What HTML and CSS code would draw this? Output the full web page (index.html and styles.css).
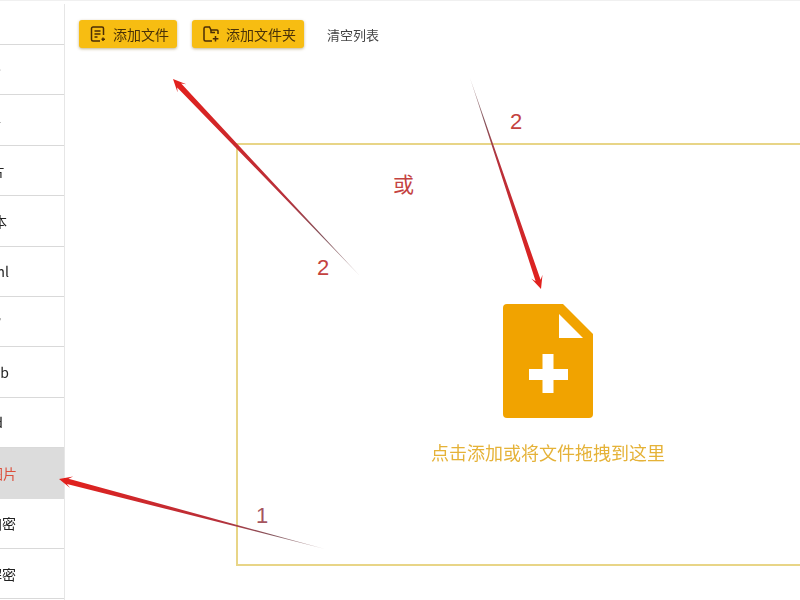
FILE: index.html
```html
<!DOCTYPE html>
<html lang="zh-CN">
<head>
<meta charset="utf-8">
<title>添加文件</title>
<link rel="stylesheet" href="styles.css">
</head>
<body>
<div class="app">
  <nav class="sidebar">
    <div class="row first"></div>
    <div class="row end-1">拆分</div>
    <div class="row end-1">合并</div>
    <div class="row end-5">图片</div>
    <div class="row end-7">文本</div>
    <div class="row end-9">html</div>
    <div class="row end-1">压缩</div>
    <div class="row end-9">web</div>
    <div class="row end-3">word</div>
    <div class="row active end-17">转图片</div>
    <div class="row end-16">文档加密</div>
    <div class="row end-16">文档解密</div>
  </nav>
  <main class="main">
    <div class="toolbar">
      <button class="btn">
        <svg class="btn-icon" viewBox="0 0 16 16"><path d="M13.500 9V2.500a1.500 1.500 0 0 0-1.500-1.500H3a1.500 1.500 0 0 0-1.500 1.500v11A1.500 1.500 0 0 0 3 15H10M4.500 5h6M4.500 8h6M4.500 11h3"/><path d="M13 11.500v3.500M11.500 13.200h3.500"/></svg>
        添加文件
      </button>
      <button class="btn">
        <svg class="btn-icon" viewBox="0 0 16 16"><path d="M15 8V5a1 1 0 0 0-1-1H8L6.500 1h-4A1.500 1.500 0 0 0 1 2.500v11A1.500 1.500 0 0 0 2.500 15H9"/><path d="M12.500 10v5.500M9.800 12.800h5.600"/><path d="M8 4v2.500h4"/></svg>
        添加文件夹
      </button>
      <span class="clear">清空列表</span>
    </div>
    <section class="drop">
      <svg class="file-icon" viewBox="0 0 90 114">
        <path class="file-body" d="M4 0H60L90 30V110a4 4 0 0 1-4 4H4a4 4 0 0 1-4-4V4a4 4 0 0 1 4-4Z"/>
        <path class="file-cut" d="M56 10L80 34H56Z"/>
        <path class="file-plus" d="M45 50V89M26 70.500H65"/>
      </svg>
      <p class="drop-label">点击添加或将文件拖拽到这里</p>
    </section>
  </main>
</div>
<svg class="arrows" viewBox="0 0 800 600">
  <defs>
    <linearGradient id="g1" gradientUnits="userSpaceOnUse" x1="325" y1="549" x2="59" y2="479">
      <stop offset="0" stop-color="#c8b8b8"/><stop offset=".2" stop-color="#84545c"/><stop offset=".4" stop-color="#b8303a"/><stop offset="1" stop-color="#e3201c"/>
    </linearGradient>
    <linearGradient id="g2" gradientUnits="userSpaceOnUse" x1="360" y1="276" x2="173" y2="79">
      <stop offset="0" stop-color="#c8b8b8"/><stop offset=".2" stop-color="#84545c"/><stop offset=".4" stop-color="#b8303a"/><stop offset="1" stop-color="#e3201c"/>
    </linearGradient>
    <linearGradient id="g3" gradientUnits="userSpaceOnUse" x1="470" y1="78" x2="541" y2="289">
      <stop offset="0" stop-color="#c8b8b8"/><stop offset=".2" stop-color="#84545c"/><stop offset=".4" stop-color="#b8303a"/><stop offset="1" stop-color="#e3201c"/>
    </linearGradient>
  </defs>
  <polygon fill="url(#g1)" points="325,549 68.500,478.700 73.100,476.500 59,479 70.100,488.100 66.900,483.900"/>
  <polygon fill="url(#g2)" points="360,276 181.200,83.600 186.300,84.300 173,79 177.600,92.500 177.200,87.400"/>
  <polygon fill="url(#g3)" points="470,78 540.600,279.700 542.500,274.800 541,289 531.200,278.600 535.600,281.300"/>
</svg>
<span class="note note-or">或</span>
<span class="note note-a">2</span>
<span class="note note-b">2</span>
<span class="note note-c">1</span>
</body>
</html>
```
FILE: styles.css
```css
* { box-sizing: border-box; }
html, body {
  margin: 0;
  width: 800px;
  height: 600px;
  overflow: hidden;
  background: #fff;
}
body {
  position: relative;
  font-family: "Noto Sans CJK SC", "Noto Sans", sans-serif;
  color: #333;
}
.app {
  display: flex;
  width: 800px;
  height: 600px;
  padding-top: 3px;
  border-top: 1px solid #f0f0f0;
  filter: blur(0.4px);
}
.sidebar {
  flex: 0 0 65px;
  display: flex;
  flex-direction: column;
  border-right: 1px solid #e6e6e6;
  overflow: hidden;
}
.row {
  flex: 0 0 50.4px;
  display: flex;
  align-items: center;
  justify-content: flex-end;
  white-space: nowrap;
  font-size: 14px;
  color: #222;
  border-bottom: 1px solid #d9d9d9;
}
.row.first { flex-basis: 41px; }
.end-1 { padding-right: 63px; }
.end-3 { padding-right: 61px; }
.end-5 { padding-right: 59px; }
.end-7 { padding-right: 57px; }
.end-9 { padding-right: 55px; }
.end-16 { padding-right: 48px; }
.end-17 { padding-right: 47px; }
.row.active {
  background: #dcdcdc;
  color: #dc4f3c;
  border-bottom-color: #dcdcdc;
}
.main {
  flex: 1;
  min-width: 0;
  padding: 16px 0 0 14px;
  overflow: hidden;
}
.toolbar {
  display: flex;
  align-items: center;
  gap: 15px;
  height: 28px;
}
.btn {
  display: flex;
  align-items: center;
  gap: 7px;
  height: 28px;
  padding: 0 8px 0 11px;
  border: 0;
  border-radius: 3px;
  background: #f7bd12;
  box-shadow: 0 1px 3px rgba(120, 90, 0, .45);
  font: 14px "Noto Sans CJK SC", sans-serif;
  color: #4a3208;
}
.btn-icon {
  width: 16px;
  height: 16px;
  fill: none;
  stroke: #4a2c06;
  stroke-width: 1.5;
}
.clear {
  margin-left: 8px;
  font-size: 13px;
  color: #444;
}
.drop {
  width: 640px;
  height: 423px;
  margin: 95px 0 0 157px;
  padding-top: 159px;
  padding-right: 18px;
  border: 2px solid #e8d587;
  border-right: 0;
  display: flex;
  flex-direction: column;
  align-items: center;
}
.file-icon {
  flex: none;
  width: 90px;
  height: 114px;
}
.file-body { fill: #f1a300; }
.file-cut { fill: #fff; }
.file-plus {
  fill: none;
  stroke: #fff;
  stroke-width: 11;
  stroke-linecap: butt;
}
.drop-label {
  margin: 21px 0 0;
  font-size: 18px;
  line-height: 26px;
  color: #e5b238;
}
.arrows {
  position: absolute;
  left: 0;
  top: 0;
  width: 800px;
  height: 600px;
  filter: blur(0.4px);
  pointer-events: none;
}
.note {
  position: absolute;
  font-family: "Liberation Sans", "Noto Sans CJK SC", sans-serif;
  font-size: 22px;
  line-height: 26px;
  color: #c4423f;
}
.note-or { left: 393px; top: 170px; font-size: 21px; font-family: "Noto Sans CJK SC", sans-serif; }
.note-a { left: 510px; top: 109px; }
.note-b { left: 317px; top: 255px; }
.note-c { left: 256px; top: 503px; color: #a5555f; }
```
